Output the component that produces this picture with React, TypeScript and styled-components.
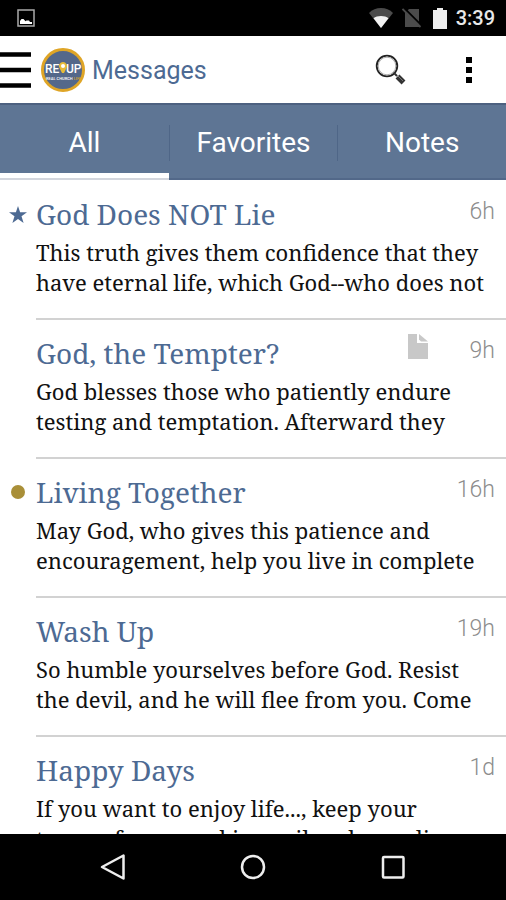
import React from "react";
import styled, { createGlobalStyle } from "styled-components";

const GlobalStyle = createGlobalStyle`
  * { box-sizing: border-box; }
  body { margin: 0; background: #fff; font-family: Roboto, sans-serif; }
  button { font: inherit; color: inherit; background: none; border: 0; padding: 0; cursor: pointer; }
  h1, h2, p, ul { margin: 0; padding: 0; font-weight: 400; }
  svg { display: block; }
`;

const Screen = styled.div`
  display: flex;
  flex-direction: column;
  height: 100vh;
  overflow: hidden;
`;

const StatusBar = styled.div`
  flex: none;
  display: flex;
  align-items: center;
  height: 36px;
  padding: 0 11px 0 17px;
  background: #000;
  color: #e8e8e8;
`;

const StatusIcons = styled.div`
  display: flex;
  align-items: center;
  margin-left: auto;
`;

const Spacer = styled.span<{ $w: number }>`
  width: ${(p) => p.$w}px;
`;

const Clock = styled.time`
  margin-left: 9px;
  font-size: 20px;
  font-weight: 500;
  line-height: 36px;
`;

const Header = styled.header`
  flex: none;
  display: flex;
  align-items: center;
  height: 67px;
  padding-right: 32px;
`;

const Brand = styled.div`
  margin: 0 7px 0 9px;
`;

const Title = styled.h1`
  flex: 1;
  padding-top: 2px;
  color: #4d6a93;
  font-size: 25px;
  line-height: 32px;
`;

const Actions = styled.div`
  display: flex;
  align-items: center;
  gap: 57px;
`;

const MoreButton = styled.button`
  padding: 0 2px;
`;

const Tabs = styled.nav`
  flex: none;
  display: grid;
  grid-template-columns: repeat(3, 1fr);
  height: 77px;
  background: #5e7594;
  border-top: 2px solid #4d6180;
`;

const Tab = styled.button<{ $active?: boolean }>`
  display: flex;
  flex-direction: column;
  color: #fff;
  font-size: 28px;
  line-height: 36px;
  border-bottom: ${(p) => (p.$active ? "2px solid #d3d6dd" : "2px solid #526889")};

  &::after {
    content: "";
    align-self: stretch;
    height: 5px;
    background: ${(p) => (p.$active ? "#fff" : "transparent")};
  }
`;

const TabLabel = styled.span<{ $divided?: boolean }>`
  flex: 1;
  display: flex;
  align-items: center;
  justify-content: center;
  align-self: stretch;
  margin: 20px 0 12px;
  border-left: ${(p) => (p.$divided ? "1px solid #4f6687" : "0")};
`;

const List = styled.ul`
  flex: 1;
  min-height: 0;
  padding-top: 1px;
  overflow: hidden;
  list-style: none;
`;

const Row = styled.li`
  display: grid;
  grid-template-columns: 36px 1fr;
`;

const Marker = styled.div`
  display: flex;
  justify-content: center;
  align-items: center;
  height: 66px;
`;

const Dot = styled.span`
  width: 14px;
  height: 14px;
  border-radius: 50%;
  background: #a98f38;
`;

const Message = styled.article`
  min-width: 0;
  padding: 13px 11px 21px 0;
  border-bottom: 2px solid #d2d2d2;
`;

const MessageTop = styled.div`
  display: flex;
  align-items: flex-start;
  height: 43px;
`;

const Subject = styled.h2`
  flex: 1;
  color: #4d6a93;
  font-family: "Noto Serif", "DejaVu Serif Condensed", "DejaVu Serif", serif;
  font-size: 28px;
  line-height: 40px;
  white-space: nowrap;
`;

const Age = styled.time`
  width: 67px;
  color: #8c8c8c;
  font-size: 23px;
  font-weight: 300;
  line-height: 36px;
  text-align: right;
`;

const Preview = styled.p`
  color: #111;
  font-family: "Noto Serif", "DejaVu Serif Condensed", "DejaVu Serif", serif;
  font-size: 22px;
  line-height: 30px;
  white-space: nowrap;
`;

const NavBar = styled.nav`
  flex: none;
  display: flex;
  justify-content: center;
  align-items: center;
  gap: 112px;
  height: 66px;
  background: #000;
`;

const PictureIcon = () => (
  <svg width="18" height="18" viewBox="0 0 18 18">
    <rect x="1" y="1" width="16" height="16" fill="none" stroke="#aaa" strokeWidth="1.5" />
    <path d="M3 15V12L4.500 10H6.500L8.500 12.300 9.500 11.500H12L13 13H15V15z" fill="#fff" />
  </svg>
);

const WifiIcon = () => (
  <svg width="24" height="20" viewBox="0 0 24 20">
    <path d="M12 20L0 5C6-1.6 18-1.6 24 5z" fill="#4b4b4b" />
    <path d="M12 20L4.500 10.300C8 7.300 16 7.300 19.500 10.300z" fill="#f2f2f2" />
  </svg>
);

const NoSimIcon = () => (
  <svg width="20" height="20" viewBox="0 0 20 20">
    <path d="M7 1H17V19H3V5z" fill="#4b4b4b" />
    <path d="M2 0L20 18" stroke="#000" strokeWidth="2" />
    <path d="M0.500 1L18.500 19" stroke="#4b4b4b" strokeWidth="1.800" />
  </svg>
);

const BatteryIcon = () => (
  <svg width="14" height="21" viewBox="0 0 14 21">
    <path d="M4 0H10V2H14V21H0V2H4z" fill="#eee" />
  </svg>
);

const MenuIcon = () => (
  <svg width="32" height="36" viewBox="0 0 32 36">
    <path d="M0 2.500H31M0 18H31M0 33.500H31" stroke="#000" strokeWidth="4.500" />
  </svg>
);

const Logo = () => (
  <svg width="44" height="46" viewBox="0 0 44 46" role="img" aria-label="RE UP">
    <circle cx="22" cy="23" r="20.500" fill="#54688a" stroke="#dfa526" strokeWidth="3" />
    <g fill="#fff" fontFamily="Roboto, sans-serif" fontWeight="500">
      <text x="4" y="26" fontSize="12">RE</text>
      <text x="25" y="26" fontSize="12">UP</text>
      <text x="5" y="33" fontSize="4">
        REAL CHURCH <tspan fill="#dfa526">LIFE</tspan>
      </text>
    </g>
    <path d="M22 15a4 4 0 0 1 3.500 6L23 26h-2L18.500 21a4 4 0 0 1 3.500-6z" fill="#e6bb38" />
    <circle cx="22" cy="19" r="2" fill="#fff" />
  </svg>
);

const SearchIcon = () => (
  <svg width="32" height="32" viewBox="0 0 32 32">
    <circle cx="12" cy="12" r="10.300" fill="none" stroke="#222" strokeWidth="1.800" />
    <circle cx="12" cy="12" r="8.800" fill="none" stroke="#999" strokeWidth="0.800" />
    <path d="M18.500 18.500L22 22" stroke="#333" strokeWidth="2" />
    <path d="M22.500 22.500L28.500 28.500" stroke="#333" strokeWidth="5.500" />
    <path d="M22.500 21.500L28 27" stroke="#777" strokeWidth="1" />
  </svg>
);

const MoreIcon = () => (
  <svg width="6" height="26" viewBox="0 0 6 26">
    <path d="M0 0H6V6H0zM0 10H6V16H0zM0 20H6V26H0z" fill="#000" />
  </svg>
);

const StarIcon = () => (
  <svg width="18" height="17" viewBox="0 0 18 17" role="img" aria-label="Favorite">
    <path d="M9 0L11.100 6.200H18L12.500 10.200 14.600 17 9 12.900 3.400 17 5.500 10.200 0 6.200H6.900z" fill="#4d6a93" />
  </svg>
);

const NoteIcon = () => (
  <svg width="20" height="28" viewBox="0 -1 20 28" role="img" aria-label="Has note">
    <path d="M0 0H9V9H20V25H0z" fill="#c8c8c8" />
    <path d="M11 0L20 7.500H13L11 5.500z" fill="#c8c8c8" />
  </svg>
);

const BackIcon = () => (
  <svg width="28" height="28" viewBox="0 0 28 28">
    <path d="M24.500 2.500V25.500L3 14z" fill="none" stroke="#eee" strokeWidth="2.500" strokeLinejoin="round" />
  </svg>
);

const HomeIcon = () => (
  <svg width="28" height="28" viewBox="0 0 28 28">
    <circle cx="14" cy="14" r="11" fill="none" stroke="#eee" strokeWidth="2.500" />
  </svg>
);

const RecentIcon = () => (
  <svg width="28" height="28" viewBox="0 0 28 28">
    <rect x="4" y="4" width="20.500" height="20.500" rx="1" fill="none" stroke="#eee" strokeWidth="2.500" />
  </svg>
);

type Item = {
  title: string;
  age: string;
  lines: [string, string];
  star?: boolean;
  unread?: boolean;
  note?: boolean;
};

const items: Item[] = [
  {
    title: "God Does NOT Lie",
    age: "6h",
    lines: ["This truth gives them confidence that they", "have eternal life, which God--who does not"],
    star: true,
  },
  {
    title: "God, the Tempter?",
    age: "9h",
    lines: ["God blesses those who patiently endure", "testing and temptation. Afterward they"],
    note: true,
  },
  {
    title: "Living Together",
    age: "16h",
    lines: ["May God, who gives this patience and", "encouragement, help you live in complete"],
    unread: true,
  },
  {
    title: "Wash Up",
    age: "19h",
    lines: ["So humble yourselves before God. Resist", "the devil, and he will flee from you. Come"],
  },
  {
    title: "Happy Days",
    age: "1d",
    lines: ["If you want to enjoy life..., keep your", "tongue from speaking evil and your lips"],
  },
];

export default function App() {
  return (
    <Screen>
      <GlobalStyle />
      <StatusBar>
        <PictureIcon />
        <StatusIcons>
          <WifiIcon />
          <Spacer $w={9} />
          <NoSimIcon />
          <Spacer $w={11} />
          <BatteryIcon />
          <Clock>3:39</Clock>
        </StatusIcons>
      </StatusBar>
      <Header>
        <button aria-label="Menu">
          <MenuIcon />
        </button>
        <Brand>
          <Logo />
        </Brand>
        <Title>Messages</Title>
        <Actions>
          <button aria-label="Search">
            <SearchIcon />
          </button>
          <MoreButton aria-label="More options">
            <MoreIcon />
          </MoreButton>
        </Actions>
      </Header>
      <Tabs>
        <Tab $active>
          <TabLabel>All</TabLabel>
        </Tab>
        <Tab>
          <TabLabel $divided>Favorites</TabLabel>
        </Tab>
        <Tab>
          <TabLabel $divided>Notes</TabLabel>
        </Tab>
      </Tabs>
      <List>
        {items.map((item) => (
          <Row key={item.title}>
            <Marker>
              {item.star && <StarIcon />}
              {item.unread && <Dot role="img" aria-label="Unread" />}
            </Marker>
            <Message>
              <MessageTop>
                <Subject>{item.title}</Subject>
                {item.note && <NoteIcon />}
                <Age>{item.age}</Age>
              </MessageTop>
              <Preview>
                {item.lines[0]}
                <br />
                {item.lines[1]}
              </Preview>
            </Message>
          </Row>
        ))}
      </List>
      <NavBar>
        <button aria-label="Back">
          <BackIcon />
        </button>
        <button aria-label="Home">
          <HomeIcon />
        </button>
        <button aria-label="Recent apps">
          <RecentIcon />
        </button>
      </NavBar>
    </Screen>
  );
}
